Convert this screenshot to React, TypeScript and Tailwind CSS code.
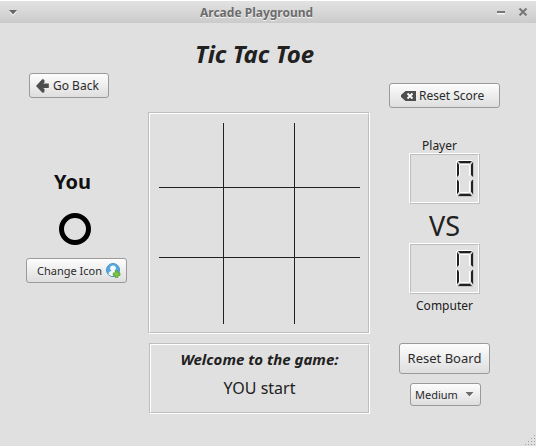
import type { ReactNode } from "react";

const buttonBase =
  "flex items-center rounded-[3px] border border-[#9a9a9a] bg-linear-to-b from-[#fdfdfd] to-[#dedede] whitespace-nowrap text-[#2b2b2b]";

function Groove({ className, children }: { className: string; children: ReactNode }) {
  return (
    <div className={`border border-t-[#bebebe] border-l-[#bebebe] border-r-white border-b-white ${className}`}>
      <div className="h-full w-full border border-t-white border-l-white border-r-[#bebebe] border-b-[#bebebe]">
        {children}
      </div>
    </div>
  );
}

function TitleBar() {
  return (
    <header className="flex h-[23px] items-center border-t border-white bg-linear-to-b from-[#e2e2e2] to-[#cbcbcb] pr-[8px] pl-[9px]">
      <svg width="36" height="22" viewBox="0 0 36 22">
        <path d="M0 10h8l-4 4.8z" fill="#fff" />
        <path d="M0 9h8l-4 4.5z" fill="#666" />
      </svg>
      <h1 className="ml-[155px] pt-px text-[12px] leading-[22px] font-bold text-[#6c6c6c] [text-shadow:0_1px_0_#f5f5f5]">Arcade Playground</h1>
      <svg width="36" height="22" viewBox="0 0 36 22" className="ml-auto">
        <path d="M5 12.5h8M27.5 8l7 7M34.5 8l-7 7" stroke="#f5f5f5" strokeWidth="2" />
        <path d="M5 11h8" stroke="#777" strokeWidth="2" />
        <path d="M27.5 7.5l7 7M34.5 7.5l-7 7" stroke="#777" strokeWidth="2.2" />
      </svg>
    </header>
  );
}

function Lcd() {
  return (
    <div className="h-[51px] w-[71px] border border-t-white border-l-white border-r-[#bebebe] border-b-[#bebebe]">
      <div className="flex h-full w-full justify-end border border-t-[#bebebe] border-l-[#bebebe] border-r-white border-b-white pt-[5px] pr-[3px]">
        <svg width="20" height="40" viewBox="0 0 20 40" role="img" aria-label="0">
          <g fill="#fff">
            <path d="M2 0h15v1H2zM1 1h1v16H1zM5 4h9v1H5zM4 5h1v11H4zM14 5h1v11h-1zM1 19h1v16H1zM4 21h1v11H4zM14 21h1v11h-1zM5 32h9v1H5z" />
          </g>
          <path d="M18 2h1v15h-1zM18 20h1v15h-1zM3 36h15v1H3z" fill="#c4c4c4" />
          <g fill="#212121">
            <path d="M3 1h14l-2 2.2H5z" />
            <path d="M2 2l2 2.5v10.5L2 17z" />
            <path d="M18 2l-2 2.5v10.5l2 2z" />
            <path d="M2 19.5l2 2v10L2 34.5z" />
            <path d="M18 19.5l-2 2v10l2 3z" />
            <path d="M3 36h14l-2-2.2H5z" />
          </g>
        </svg>
      </div>
    </div>
  );
}

function UserIcon() {
  return (
    <svg width="15" height="15" viewBox="0 0 15 15">
      <circle cx="7" cy="7" r="6.5" fill="#55a9de" stroke="#4a93c6" />
      <circle cx="7" cy="5.2" r="2.8" fill="#f7fbff" />
      <path d="M2.5 11.3c0-4.6 9-4.6 9 0-2 2.4-7 2.4-9 0z" fill="#f7fbff" />
      <path d="M9.3 7.8h2.6v2.1H14v2.6h-2.1v2.1H9.3v-2.1H7.2V9.9h2.1z" fill="#7cc643" stroke="#4f9a25" strokeWidth=".7" />
    </svg>
  );
}

export default function App() {
  return (
    <main className="relative flex h-[446px] w-[536px] flex-col overflow-hidden bg-[#e0e0e0] font-['Noto_Sans',sans-serif] text-[#212121]">
      <TitleBar />
      <div className="flex flex-1">
        <section className="flex w-[148px] flex-col items-start">
          <button className={`${buttonBase} mt-[50px] ml-[29px] h-[25px] w-[80px] pl-[6px] text-[12px]`}>
            <svg width="14" height="14" viewBox="0 0 14 14" className="mr-[3px] shrink-0">
              <path d="M0 7l6.2-6.7q1.8-.4 2.3 1.2v3h4.3v4.6H8.5v3.3q-.6 1.6-2.3 1.2z" fill="#4d4d4d" />
              <path d="M8.7 3.4L7.2 4.8h1.5zM8.7 10.5L7.2 9.1h1.5z" fill="#f0f0f0" />
            </svg>
            Go Back
          </button>
          <h3 className="mt-[70px] ml-[54px] text-[20px] leading-[28px] font-bold text-[#101010]">You</h3>
          <div className="mt-[17px] ml-[59px] h-[32px] w-[32px] rounded-full border-[5px] border-black" />
          <button className={`${buttonBase} mt-[13px] ml-[26px] h-[25px] w-[101px] pl-[10px] text-[11px]`}>
            <span className="pt-[2px]">Change Icon</span>
            <span className="ml-[4px]"><UserIcon /></span>
          </button>
        </section>

        <section className="flex w-[222px] flex-col items-end">
          <h2 className="mt-[14px] h-[75px] w-full pr-[9px] text-center text-[24px] leading-[34px] font-bold italic">Tic Tac Toe</h2>
          <Groove className="h-[222px] w-[222px]">
            <div className="mt-[9px] ml-[9px] grid h-[201px] w-[201px] grid-cols-[65px_71px_65px] grid-rows-[65px_70px_66px]">
              <div className="border-r border-b border-[#212121]" />
              <div className="border-r border-b border-[#212121]" />
              <div className="border-b border-[#212121]" />
              <div className="border-r border-b border-[#212121]" />
              <div className="border-r border-b border-[#212121]" />
              <div className="border-b border-[#212121]" />
              <div className="border-r border-[#212121]" />
              <div className="border-r border-[#212121]" />
              <div />
            </div>
          </Groove>
          <Groove className="mt-[9px] h-[71px] w-[221px] text-center">
            <p className="mt-[4px] text-[15px] leading-[20px] font-bold italic">Welcome to the game:</p>
            <p className="mt-[8px] text-[16px] leading-[22px]">YOU start</p>
          </Groove>
        </section>

        <section className="flex w-[166px] flex-col items-start">
          <button className={`${buttonBase} mt-[60px] ml-[19px] h-[25px] w-[111px] pl-[11px] text-[12px]`}>
            <svg width="15" height="10" viewBox="0 0 15 10" className="mr-[3px] shrink-0">
              <path d="M4.5 0H15v10H4.5L0 6V4z" fill="#4d4d4d" />
              <path d="M6.5 2.5l5 5M11.5 2.5l-5 5" stroke="#fff" strokeWidth="1.8" />
            </svg>
            Reset Score
          </button>
          <div className="ml-[39px] flex w-[71px] flex-col items-center">
            <span className="mt-[29px] mr-[10px] h-[16px] text-[12px] leading-[17px]">Player</span>
            <Lcd />
            <span className="h-[39px] text-[27px] leading-[43px]">VS</span>
            <Lcd />
            <span className="mt-[3px] text-[12px] leading-[17px]">Computer</span>
          </div>
          <button className={`${buttonBase} mt-[29px] ml-[29px] h-[31px] w-[91px] justify-center pt-px text-[13px]`}>Reset Board</button>
          <button className={`${buttonBase} mt-[9px] ml-[40px] h-[23px] w-[71px] justify-between pr-[6px] pl-[4px] text-[11px]`}>
            <span className="pt-[2px]">Medium</span>
            <svg width="9" height="6" viewBox="0 0 9 6">
              <path d="M1 1h8L5 5.6z" fill="#fff" />
              <path d="M.5 0h8l-4 4.5z" fill="#6c6c6c" />
            </svg>
          </button>
        </section>
      </div>
      <svg className="absolute right-0 bottom-0" width="12" height="12" viewBox="0 0 12 12">
        <path d="M10 1h1v1h-1zM7 4h1v1h-1zM10 4h1v1h-1zM4 7h1v1H4zM7 7h1v1H7zM10 7h1v1h-1zM1 10h1v1H1zM4 10h1v1H4zM7 10h1v1H7zM10 10h1v1h-1z" fill="#a0a0a0" />
      </svg>
    </main>
  );
}
